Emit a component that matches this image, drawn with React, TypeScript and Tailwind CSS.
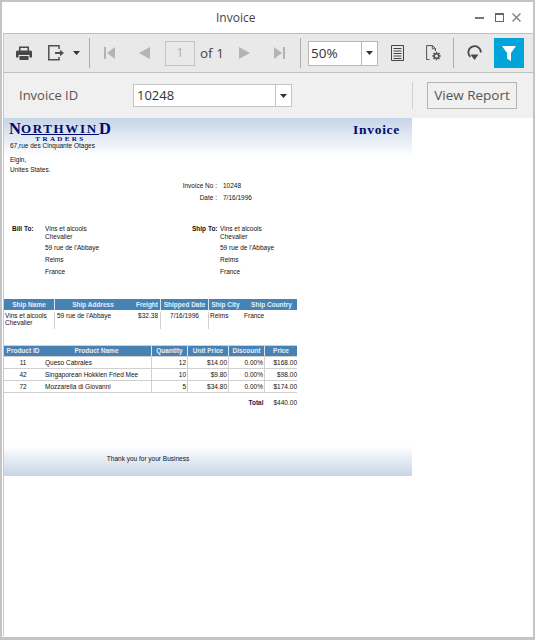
const UI = "font-['Open_Sans',sans-serif]";

function Sep() {
  return <div className="h-[30px] w-px bg-[#adadad]" />;
}

function Caret() {
  return (
    <svg width="7" height="4" viewBox="0 0 7 4">
      <path d="M0 0h7L3.500 4z" fill="#333" />
    </svg>
  );
}

function Printer() {
  return (
    <svg width="16" height="14" viewBox="0 0 16 14" fill="#484848">
      <path d="M3 .5h10V5h-1.500V2h-7v3H3z" />
      <path d="M1.500 4.500h13A1.500 1.500 0 0 1 16 6v5.500h-2.500V9h-11v2.500H0V6a1.500 1.500 0 0 1 1.500-1.500z" />
      <path d="M3.500 10h9v4h-9z" />
    </svg>
  );
}

function Export() {
  return (
    <svg width="16" height="16" viewBox="0 0 16 16" fill="none" stroke="#505050" strokeWidth="1.500">
      <path d="M11 4V.8H.8v14h10.200V12" />
      <path d="M7 8h5" strokeWidth="2" />
      <path d="M12 4.800 16 8l-4 3.200z" fill="#505050" stroke="none" />
    </svg>
  );
}

function Nav({ kind }: { kind: "first" | "prev" | "next" | "last" }) {
  return (
    <svg width="11" height="12" viewBox="0 0 11 12" fill="#b4b4b4">
      {kind === "first" && <path d="M0 0h2v12H0zM11 0v12L3 6z" />}
      {kind === "prev" && <path d="M11 0v12L0 6z" />}
      {kind === "next" && <path d="M0 0v12l11-6z" />}
      {kind === "last" && <path d="M9 0h2v12H9zM0 0v12l8-6z" />}
    </svg>
  );
}

function PageIcon() {
  return (
    <svg width="13" height="16" viewBox="0 0 13 16" fill="none" stroke="#444">
      <path d="M.5.5h12v15H.5z" />
      <path d="M2.500 3.500h8M2.500 6h8M2.500 8.500h8M2.500 11h8M2.500 13.500h8" />
    </svg>
  );
}

function PageSetup() {
  return (
    <svg width="15" height="16" viewBox="0 0 15 16" fill="none" stroke="#505050">
      <path d="M3.500 14.500H.6V.6h5.900l3 3v2.400M6.300.6v3.200h3.200" />
      <circle cx="10.500" cy="11" r="2.300" strokeWidth="1.500" />
      <path d="M10.500 6.800v1.700M10.500 13.500v1.700M6.300 11H8M13 11h1.700M7.500 8l1.200 1.200M12.300 12.800l1.200 1.200M13.500 8l-1.200 1.200M8.700 12.800 7.500 14" strokeWidth="1.400" />
    </svg>
  );
}

function Refresh() {
  return (
    <svg width="15" height="16" viewBox="0 0 15 16" fill="none">
      <path d="M13.800 7.500A6.200 6.200 0 1 0 3.300 11.800" stroke="#484848" strokeWidth="1.800" />
      <path d="M3.500 9.500h8l-4 5.500z" fill="#484848" />
    </svg>
  );
}

function Filter() {
  return (
    <svg width="14" height="15" viewBox="0 0 14 15" fill="#fff">
      <path d="M0 0h14L9 7v8L5 12.500V7z" />
    </svg>
  );
}

function Toolbar() {
  return (
    <div className="flex h-[40px] items-center border-t border-b border-[#c0c0c0] bg-[#e9e9e9] text-[#444]">
      <div className="ml-[12px]"><Printer /></div>
      <div className="ml-[16px]"><Export /></div>
      <div className="ml-[9px]"><Caret /></div>
      <div className="ml-[9px]"><Sep /></div>
      <div className="ml-[14px]"><Nav kind="first" /></div>
      <div className="ml-[24px]"><Nav kind="prev" /></div>
      <div className="ml-[15px] flex h-[25px] w-[30px] items-center justify-center border border-[#c4c4c4] text-[13px] text-[#b0b0b0]">1</div>
      <span className="ml-[5px] w-[24px] whitespace-nowrap text-[13.500px] text-[#444]">of 1</span>
      <div className="ml-[15px]"><Nav kind="next" /></div>
      <div className="ml-[24px]"><Nav kind="last" /></div>
      <div className="ml-[15px]"><Sep /></div>
      <div className="ml-[7px] flex h-[25px] w-[70px] items-center border border-[#b8b8b8] bg-white">
        <span className="flex-1 pl-[2px] text-[13.500px] text-[#333]">50%</span>
        <div className="flex h-full w-[16px] items-center justify-center border-l border-[#b8b8b8]"><Caret /></div>
      </div>
      <div className="ml-[13px]"><PageIcon /></div>
      <div className="ml-[22px]"><PageSetup /></div>
      <div className="ml-[12px]"><Sep /></div>
      <div className="ml-[13px]"><Refresh /></div>
      <div className="ml-[12px] flex h-[30px] w-[30px] items-center justify-center bg-[#00a4d9]"><Filter /></div>
    </div>
  );
}

function ParamBar() {
  return (
    <div className="flex h-[45px] items-center bg-[#f0f0f0] text-[13px] text-[#555]">
      <span className="ml-[15px] w-[114px]">Invoice ID</span>
      <div className="flex h-[23px] w-[159px] items-center border border-[#c4c4c4] bg-white">
        <span className="flex-1 pl-[3px] text-[#333]">10248</span>
        <div className="flex h-full w-[16px] items-center justify-center border-l border-[#c4c4c4]"><Caret /></div>
      </div>
      <div className="ml-[120px] h-[27px] w-px bg-[#d0d0d0]" />
      <div className="ml-[14px] flex h-[27px] w-[90px] items-center justify-center border border-[#b4b4b4] text-[13.500px]">View Report</div>
    </div>
  );
}

function Logo() {
  return (
    <div className="h-[18px] w-[102px] font-['Liberation_Serif',serif] font-bold leading-none text-[#000a6e]">
      <div className="flex h-[12px] items-end">
        <span className="text-[16.500px] leading-[12px]">N</span>
        <span className="flex-1 whitespace-nowrap border-b border-[#000a6e] text-[13px] leading-[11px] tracking-[1.650px]">ORTHWIN</span>
        <span className="text-[16.500px] leading-[12px]">D</span>
      </div>
      <div className="mt-[2px] pl-[1px] text-center text-[7px] leading-[5px] tracking-[2.400px]">TRADERS</div>
    </div>
  );
}

const shipCols = "grid-cols-[50px_77px_29px_48px_38px_1fr]";
const itemCols = "grid-cols-[38px_109px_36px_41px_36px_1fr]";

const items = [
  ["11", "Queso Cabrales", "12", "$14.00", "0.00%", "$168.00"],
  ["42", "Singaporean Hokkien Fried Mee", "10", "$9.80", "0.00%", "$98.00"],
  ["72", "Mozzarella di Giovanni", "5", "$34.80", "0.00%", "$174.00"],
];

function AddressBlock({ label, labelWidth }: { label: string; labelWidth: string }) {
  return (
    <div className="flex">
      <div className={`font-bold ${labelWidth}`}>{label}</div>
      <div>
        <div className="h-[8px] leading-[8px]">Vins et alcools</div>
        <div className="h-[11px] leading-[8px]">Chevalier</div>
        <div className="h-[12px] leading-[8px]">59 rue de l'Abbaye</div>
        <div className="h-[12px] leading-[8px]">Reims</div>
        <div className="h-[12px] leading-[8px]">France</div>
      </div>
    </div>
  );
}

function Report() {
  return (
    <div className="w-[408px] bg-white font-['Liberation_Sans',sans-serif] text-[6.500px] leading-[8px] text-[#111]">
      <div className="h-[38px] bg-gradient-to-b from-[#c6d4e7] to-white pl-[5px] pr-[12px] pt-[5px]">
        <div className="flex items-start justify-between">
          <Logo />
          <div className="font-['Liberation_Serif',serif] text-[13.500px] font-bold leading-[13px] tracking-[0.700px] text-[#000a6e]">Invoice</div>
        </div>
        <div className="ml-px mt-[1px]">67,rue des Cinquante Otages</div>
      </div>
      <div className="pl-[6px]">
        <div className="h-[10px]">Elgin,</div>
        <div className="h-[10px]">Unites States.</div>
      </div>
      <div className="mt-[6px] flex h-[12px]">
        <div className="w-[213px] text-right">Invoice No :</div>
        <div className="ml-[6px]">10248</div>
      </div>
      <div className="flex h-[12px]">
        <div className="w-[213px] text-right">Date :</div>
        <div className="ml-[6px]">7/16/1996</div>
      </div>
      <div className="ml-[8px] mt-[19px] flex">
        <div className="w-[180px]"><AddressBlock label="Bill To:" labelWidth="w-[33px]" /></div>
        <AddressBlock label="Ship To:" labelWidth="w-[28px]" />
      </div>
      <div className="w-[293px]">
        <div className={`mt-[19px] grid h-[11px] ${shipCols} bg-[#4682b4] text-center font-bold leading-[11px] text-[#e8eff6]`}>
          <div>Ship Name</div>
          <div className="border-l border-[#d8e4ee]">Ship Address</div>
          <div className="pr-[2px] text-right">Freight</div>
          <div className="border-l border-[#d8e4ee]">Shipped Date</div>
          <div className="border-l border-[#d8e4ee] pr-[4px]">Ship City</div>
          <div>Ship Country</div>
        </div>
        <div className={`grid h-[19px] ${shipCols} pt-[2px] leading-[7px]`}>
          <div className="pl-[1px]">Vins et alcools Chevalier</div>
          <div className="border-l border-[#d0d0d0] pl-[2px]">59 rue de l'Abbaye</div>
          <div className="pr-[2px] text-right">$32.38</div>
          <div className="border-l border-[#d0d0d0] text-center">7/16/1996</div>
          <div className="border-l border-[#d0d0d0] pl-[1px]">Reims</div>
          <div className="-ml-[2px]">France</div>
        </div>
        <div className={`mt-[16px] grid h-[12px] ${itemCols} border-y border-[#d0d0d0] bg-[#4682b4] text-center font-bold leading-[10px] text-[#e8eff6]`}>
          <div>Product ID</div>
          <div>Product Name</div>
          <div className="border-l border-[#d8e4ee]">Quantity</div>
          <div className="border-l border-[#d8e4ee]">Unit Price</div>
          <div className="border-l border-[#d8e4ee]">Discount</div>
          <div className="border-l border-[#d8e4ee]">Price</div>
        </div>
        {items.map((row) => (
          <div key={row[0]} className={`grid h-[12px] ${itemCols} border-b border-[#d0d0d0] leading-[11px] text-[#111]`}>
            <div className="text-center">{row[0]}</div>
            <div className="pl-[3px]">{row[1]}</div>
            <div className="border-l border-[#d0d0d0] pr-px text-right">{row[2]}</div>
            <div className="border-l border-[#d0d0d0] pr-px text-right">{row[3]}</div>
            <div className="border-l border-[#d0d0d0] pr-px text-right">{row[4]}</div>
            <div className="border-l border-[#d0d0d0] text-right">{row[5]}</div>
          </div>
        ))}
        <div className="mt-[6px] flex justify-end font-bold text-[#1a1a50]">
          <span>Total</span>
          <span className="ml-[10px] font-normal text-[#222]">$440.00</span>
        </div>
      </div>
      <div className="mt-[39px] flex h-[30px] items-center justify-center bg-gradient-to-b from-white to-[#c6d4e7] pb-[4px] pr-[120px]">
        Thank you for your Business
      </div>
    </div>
  );
}

export default function App() {
  return (
    <div className={`h-[640px] w-[535px] border-2 border-b-[3px] border-[#c4c4c4] bg-white ${UI}`}>
      <div className="flex h-[31px] items-center">
        <div className="ml-[214px] text-[12px] text-[#444]">Invoice</div>
        <div className="ml-auto mr-[12px] flex items-center">
          <div className="h-[2px] w-[9px] bg-[#777]" />
          <div className="ml-[11px] h-[9px] w-[9px] border border-t-2 border-[#666]" />
          <svg className="ml-[8px]" width="9" height="9" viewBox="0 0 9 9" stroke="#888" strokeWidth="1.500"><path d="M.5.5l8 8M8.500.5l-8 8" /></svg>
        </div>
      </div>
      <div className="ml-px h-[603px] border-l border-[#c8c8c8]">
        <Toolbar />
        <ParamBar />
        <Report />
      </div>
    </div>
  );
}
